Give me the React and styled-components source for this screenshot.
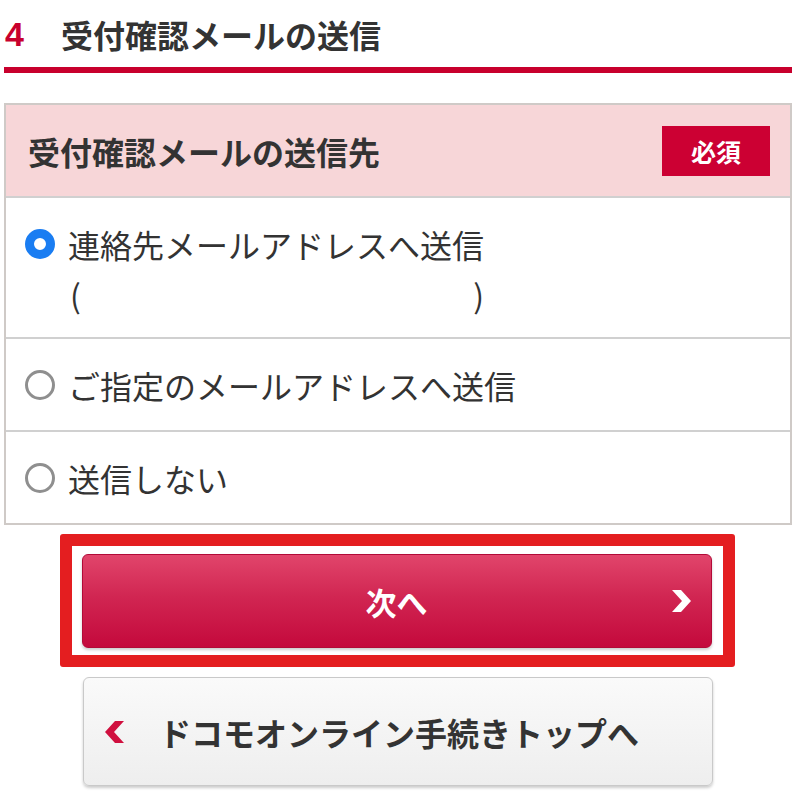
import React, { useState } from 'react';
import styled, { createGlobalStyle } from 'styled-components';

const GlobalStyle = createGlobalStyle`
    body {
        margin: 0;
        background: #fff;
        font-family: "Noto Sans CJK JP", "Noto Sans", sans-serif;
        color: #333;
    }
`;

const Page = styled.div`
    width: 796px;
    padding: 0 4px;
    box-sizing: border-box;
`;

const SectionTitle = styled.h2`
    margin: 0;
    height: 73px;
    display: flex;
    align-items: center;
    font-size: 32px;
    font-weight: 700;
    color: #333;
    border-bottom: 6px solid #c8002d;
    box-sizing: border-box;
    line-height: 1;
    & span {
        color: #c8002d;
        width: 56px;
        padding-left: 1px;
        font-size: 34px;
        font-family: "Liberation Sans", sans-serif;
    }
`;

const Card = styled.div`
    margin-top: 30px;
    border: 2px solid #cfcac7;
`;

const CardHeader = styled.div`
    background: #f7d6d8;
    height: 91px;
    display: flex;
    align-items: center;
    justify-content: space-between;
    padding: 0 20px 0 22px;
    font-size: 32px;
    font-weight: 700;
    color: #333;
`;

const Badge = styled.span`
    background: #cc0033;
    color: #fff;
    font-size: 25px;
    font-weight: 700;
    width: 108px;
    height: 50px;
    display: flex;
    align-items: center;
    justify-content: center;
`;

const Option = styled.label`
    display: flex;
    align-items: flex-start;
    border-top: 2px solid #d0d0d0;
    padding: 20px 20px 19px 20px;
    font-size: 32px;
    line-height: 52px;
    color: #333;
    cursor: pointer;
`;

const Radio = styled.span`
    flex: none;
    width: 30px;
    height: 30px;
    margin: 11px 13px 0 -1px;
    border-radius: 50%;
    box-sizing: border-box;
    border: ${p => (p.checked ? '9px solid #1a7df2' : '3px solid #8f8f8f')};
    background: #fff;
`;

const OptionText = styled.div`
    display: flex;
    flex-direction: column;
`;

const Address = styled.div`
    display: flex;
    justify-content: space-between;
    width: 414px;
    line-height: 48px;
    padding-left: 2px;
`;

const Actions = styled.div`
    display: flex;
    flex-direction: column;
    align-items: center;
    padding-top: 9px;
    gap: 10px;
`;

const Highlight = styled.div`
    border: 12px solid #e41e20;
    border-radius: 3px;
    padding: 8px 12px 7px 10px;
    width: 675px;
    box-sizing: border-box;
    margin-left: -2px;
`;

const Button = styled.button`
    position: relative;
    width: 630px;
    height: ${p => (p.primary ? '94px' : '109px')};
    border-radius: 6px;
    display: flex;
    align-items: center;
    justify-content: center;
    font-family: inherit;
    font-size: ${p => (p.primary ? '31px' : '32px')};
    font-weight: 700;
    color: ${p => (p.primary ? '#fff' : '#333')};
    border: 1px solid ${p => (p.primary ? '#b20a37' : '#c9c9c9')};
    background: ${p =>
        p.primary
            ? 'linear-gradient(#e1456b, #d12652 45%, #c4093c 100%)'
            : 'linear-gradient(#fafafa, #eeeeee)'};
    box-shadow: 0 2px 3px rgba(0, 0, 0, 0.2);
    cursor: pointer;
    padding: 0;
`;

const BackButton = styled(Button)`
    justify-content: flex-start;
    padding-left: 75px;
    margin-bottom: 12px;
`;

const Chevron = styled.svg`
    position: absolute;
    top: 50%;
    transform: translateY(-50%);
    ${p => (p.left ? 'left: 20px;' : 'right: 19px;')}
`;

const options = [
    { id: 'contact', label: '連絡先メールアドレスへ送信', address: true },
    { id: 'custom', label: 'ご指定のメールアドレスへ送信' },
    { id: 'none', label: '送信しない' }
];

const App = () => {
    const [selected, setSelected] = useState('contact');

    return (
        <Page>
            <GlobalStyle />
            <SectionTitle>
                <span>4</span>受付確認メールの送信
            </SectionTitle>

            <Card>
                <CardHeader>
                    受付確認メールの送信先
                    <Badge>必須</Badge>
                </CardHeader>
                {options.map(o => (
                    <Option key={o.id} onClick={() => setSelected(o.id)}>
                        <Radio checked={selected === o.id} />
                        <OptionText>
                            {o.label}
                            {o.address && (
                                <Address>
                                    <span>(</span>
                                    <span>)</span>
                                </Address>
                            )}
                        </OptionText>
                    </Option>
                ))}
            </Card>

            <Actions>
                <Highlight>
                    <Button primary>
                        次へ
                        <Chevron width="22" height="24" viewBox="0 0 22 24">
                            <path d="M2 1 L11 1 L21 12 L11 23 L2 23 L12 12 Z" fill="#fff" />
                        </Chevron>
                    </Button>
                </Highlight>
                <BackButton>
                    <Chevron left width="22" height="24" viewBox="0 0 22 24">
                        <path d="M20 1 L11 1 L1 12 L11 23 L20 23 L10 12 Z" fill="#d0103f" />
                    </Chevron>
                    ドコモオンライン手続きトップへ
                </BackButton>
            </Actions>
        </Page>
    );
};

export default App;
